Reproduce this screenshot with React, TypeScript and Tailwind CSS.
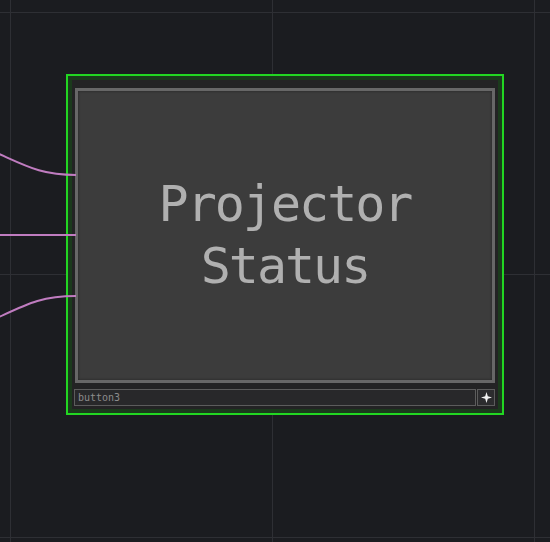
import React from 'react';

const gridX = [10, 272, 534];
const gridY = [12, 274, 537];

const Sparkle = () => (
  <svg width="11" height="11" viewBox="0 0 11 11">
    <path d="M5.5 0 L6.8 4.2 L11 5.5 L6.8 6.8 L5.5 11 L4.2 6.8 L0 5.5 L4.2 4.2 Z" fill="#f2f2f2" />
  </svg>
);

const Wires = () => (
  <svg className="absolute inset-0 pointer-events-none" width="550" height="542">
    <g stroke="#c07cc0" strokeWidth="2" fill="none">
      <path d="M-40 138 C 20 160, 30 175, 76 175" />
      <path d="M0 235 L76 235" />
      <path d="M-40 334 C 20 310, 30 296, 76 296" />
    </g>
  </svg>
);

export default function App() {
  return (
    <div className="relative w-[550px] h-[542px] overflow-hidden bg-[#1b1c20]">
      {gridX.map((x) => (
        <div key={'x' + x} className="absolute top-0 bottom-0 w-px bg-[#2e2f34]" style={{ left: x }} />
      ))}
      {gridY.map((y) => (
        <div key={'y' + y} className="absolute left-0 right-0 h-px bg-[#2e2f34]" style={{ top: y }} />
      ))}

      {/* node */}
      <div className="absolute left-[66px] top-[74px] w-[438px] h-[341px] border-2 border-[#22d622]">
        <div className="w-full h-full border-4 border-[#1b3a1c] bg-[#232324] flex flex-col px-[3px] pt-[8px] pb-[3px]">
          <div className="flex-1 border-[3px] border-[#676767] bg-[#3c3c3c] shadow-[inset_0_0_3px_rgba(0,0,0,0.4)] flex flex-col items-center justify-center">
            <div
              className="text-[#b0b0b0] text-[50px] leading-[62px] tracking-[-2px] text-center pb-[2px]"
              style={{ fontFamily: '"DejaVu Sans Mono", monospace' }}
            >
              <div>Projector</div>
              <div>Status</div>
            </div>
          </div>
          <div className="mt-[6px] h-[17px] flex -ml-px">
            <div
              className="flex-1 border border-[#5c5c5c] bg-[#28282a] text-[#8c8c8c] text-[10px] leading-[15px] px-[3px]"
              style={{ fontFamily: '"DejaVu Sans Mono", monospace' }}
            >
              button3
            </div>
            <div className="w-[18px] ml-px border border-[#5c5c5c] bg-[#2c2c2e] flex items-center justify-center">
              <Sparkle />
            </div>
          </div>
        </div>
      </div>

      <Wires />
    </div>
  );
}
